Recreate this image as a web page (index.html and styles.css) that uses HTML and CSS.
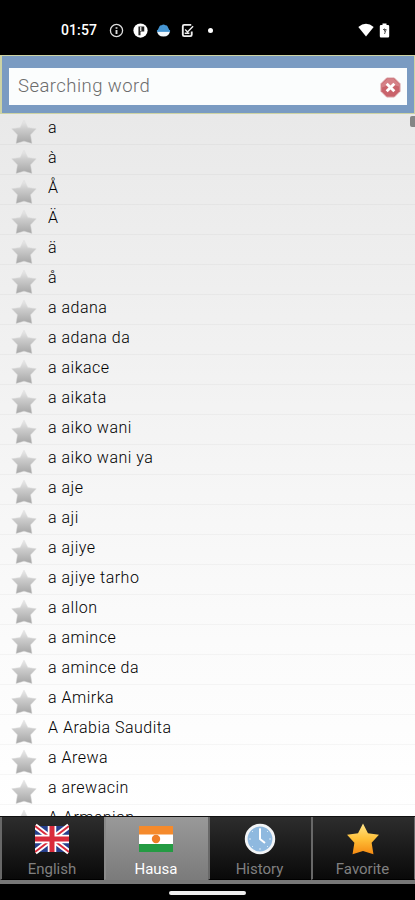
FILE: index.html
```html
<!DOCTYPE html>
<html lang="ha">
<head>
<meta charset="utf-8">
<title>Dictionary</title>
<link rel="stylesheet" href="styles.css">
</head>
<body>
<svg class="defs" width="0" height="0">
  <defs>
    <linearGradient id="silver" x1="0" y1="0" x2="0" y2="1"><stop offset="0" stop-color="#ececec"/><stop offset=".4" stop-color="#cbcbcb"/><stop offset="1" stop-color="#a6a6a6"/></linearGradient>
    <linearGradient id="gold" x1="0" y1="0" x2="0" y2="1"><stop offset="0" stop-color="#ffe58a"/><stop offset=".5" stop-color="#ffc038"/><stop offset="1" stop-color="#f58a12"/></linearGradient>
    <symbol id="star" viewBox="0 0 26 26"><path d="M13 1.200 16.800 8.600 25.200 9.800 19.600 15.800 21 24.600 13 22.200 5 24.600 6.400 15.800.8 9.800 9.200 8.600Z" stroke-linejoin="round"/></symbol>
  </defs>
</svg>
<div class="phone">
  <header class="status">
    <span class="time">01:57</span>
    <svg class="sicon" viewBox="0 0 16 16"><circle cx="8" cy="8" r="6.500" fill="none" stroke="#ddd" stroke-width="1.400"/><path d="M8 4.500v1.700M8 7.400v4.200" stroke="#ddd" stroke-width="2"/></svg>
    <svg class="sicon" viewBox="0 0 16 16"><circle cx="8" cy="8" r="7.600" fill="#fff"/><path d="M5.800 13V3.800H12V9H8v4Z" fill="#222"/><path d="M8.300 4v4.500" stroke="#fff" stroke-width="1.200"/></svg>
    <svg class="sicon" viewBox="0 0 16 16"><path d="M3 5Q4 1.500 6 2.500q2-2 4 0 2-1 3 2.500l2 4H1Z" fill="#4595d2"/><path d="M1 8h14Q14.500 14.500 8 14.500T1 8Z" fill="#f1f7fb"/><path d="M1 8.500h14" stroke="#348bcc" stroke-width="1.800"/></svg>
    <svg class="sicon" viewBox="0 0 16 16"><path d="M12 2H4.500Q3 2 3 3.500V12.500Q3 14 4.500 14H11Q12.500 14 12.500 12.500V9" fill="none" stroke="#eee" stroke-width="2"/><path d="M5.500 7 8 9.500 14 3.500M5 11h5" fill="none" stroke="#eee" stroke-width="1.500"/></svg>
    <i class="dot"></i>
    <svg class="wifi" viewBox="0 0 16 14"><path d="M.3 4Q8-2.500 15.700 4L8 13.500Z" fill="#fff"/></svg>
    <svg class="battery" viewBox="0 0 10 15"><path d="M3 .5h4V2h1.500Q9.700 2 9.700 3.200v10q0 1.300-1.200 1.300h-7Q.3 14.500.3 13.200v-10Q.3 2 1.500 2H3Z" fill="#fff"/><path d="M3.500 6.500h3.200L5 11M5 5.500v3" stroke="#555" fill="none"/></svg>
  </header>
  <div class="search">
    <div class="field"><span>Searching word</span>
      <svg class="clear" viewBox="0 0 22 22"><path d="M7 1h8l6 6v8l-6 6H7l-6-6V7Z" fill="#c9636b" stroke="#d9a0a4"/><path d="M2 9V7.400L7.400 2h7.200L20 7.400V10Q11 7 2 11Z" fill="#dc9297" opacity=".65"/><path d="m7 7 8 8m0-8-8 8" stroke="#fff" stroke-width="3"/></svg>
    </div>
  </div>
  <main class="words">
    <i class="thumb"></i>
    <div class="row"><svg><use href="#star"/></svg><span>a</span></div>
    <div class="row"><svg><use href="#star"/></svg><span>à</span></div>
    <div class="row"><svg><use href="#star"/></svg><span>Å</span></div>
    <div class="row"><svg><use href="#star"/></svg><span>Ä</span></div>
    <div class="row"><svg><use href="#star"/></svg><span>ä</span></div>
    <div class="row"><svg><use href="#star"/></svg><span>å</span></div>
    <div class="row"><svg><use href="#star"/></svg><span>a adana</span></div>
    <div class="row"><svg><use href="#star"/></svg><span>a adana da</span></div>
    <div class="row"><svg><use href="#star"/></svg><span>a aikace</span></div>
    <div class="row"><svg><use href="#star"/></svg><span>a aikata</span></div>
    <div class="row"><svg><use href="#star"/></svg><span>a aiko wani</span></div>
    <div class="row"><svg><use href="#star"/></svg><span>a aiko wani ya</span></div>
    <div class="row"><svg><use href="#star"/></svg><span>a aje</span></div>
    <div class="row"><svg><use href="#star"/></svg><span>a aji</span></div>
    <div class="row"><svg><use href="#star"/></svg><span>a ajiye</span></div>
    <div class="row"><svg><use href="#star"/></svg><span>a ajiye tarho</span></div>
    <div class="row"><svg><use href="#star"/></svg><span>a allon</span></div>
    <div class="row"><svg><use href="#star"/></svg><span>a amince</span></div>
    <div class="row"><svg><use href="#star"/></svg><span>a amince da</span></div>
    <div class="row"><svg><use href="#star"/></svg><span>a Amirka</span></div>
    <div class="row"><svg><use href="#star"/></svg><span>A Arabia Saudita</span></div>
    <div class="row"><svg><use href="#star"/></svg><span>a Arewa</span></div>
    <div class="row"><svg><use href="#star"/></svg><span>a arewacin</span></div>
    <div class="row"><svg><use href="#star"/></svg><span>A Armenian</span></div>
  </main>
  <nav class="tabs">
    <div class="tab">
      <svg viewBox="0 0 34 34"><path fill="#263f8c" d="M0 4h34v26H0z"/><path d="m0 4 34 26M34 4 0 30" stroke="#fff" stroke-width="5.500"/><path d="m0 4 34 26M34 4 0 30" stroke="#d92b3c" stroke-width="2"/><path d="M17 4v26M0 17h34" stroke="#fff" stroke-width="8.500"/><path d="M17 4v26M0 17h34" stroke="#d92b3c" stroke-width="5"/></svg>
      <span>English</span>
    </div>
    <div class="tab active">
      <svg viewBox="0 0 34 34"><path fill="#fff" d="M0 4h34v26H0z"/><path fill="#f58a2c" d="M0 4h34v8.500H0z"/><path fill="#249b43" d="M0 22h34v8H0z"/><circle cx="17" cy="17" r="4.200" fill="#ef7e27"/></svg>
      <span>Hausa</span>
    </div>
    <div class="tab">
      <svg viewBox="0 0 34 34"><circle cx="17" cy="17" r="13.800" fill="#8fb9df" stroke="#f2f4f6" stroke-width="2.800"/><path d="M17 6v2m0 18v2M6 17h2m18 0h2M9 9l1 1m14 14 1 1M25 9l-1 1M10 24l-1 1" stroke="#d9e9f6"/><path d="M17 6.500V17l5 4" fill="none" stroke="#fff" stroke-width="2"/></svg>
      <span>History</span>
    </div>
    <div class="tab last">
      <svg class="gold" viewBox="0 0 34 34"><use href="#star"/></svg>
      <span>Favorite</span>
    </div>
  </nav>
  <footer class="home"><i></i></footer>
</div>
</body>
</html>
```
FILE: styles.css
```css
* { box-sizing: border-box; }
body { margin: 0; background: #000; font-family: Roboto, "Liberation Sans", sans-serif; }
.defs { position: absolute; }
.phone { width: 415px; height: 900px; display: flex; flex-direction: column; overflow: hidden; }
.status { height: 55px; flex: none; display: flex; align-items: center; padding: 5px 25px 0 61px; color: #fff; }
.time { width: 48px; font-size: 14px; font-weight: 500; letter-spacing: .1px; }
.sicon { width: 15px; height: 15px; margin-right: 8.500px; }
.dot { width: 5px; height: 5px; margin-left: 5px; border-radius: 50%; background: #fff; }
.wifi { width: 16px; height: 14px; margin-left: auto; }
.battery { width: 11px; height: 15px; margin-left: 5px; }
.search { height: 59px; flex: none; padding: 12px 7px 8px 7px; background: #7a9bc2; border: 1px solid #cdd3a4; border-left-width: 2px; }
.field { height: 37px; display: flex; align-items: center; justify-content: space-between; padding: 0 6px 1px 9px; background: #fbfdfd; color: #6c6c6c; font-size: 18.500px; font-weight: 300; letter-spacing: .45px; }
.clear { width: 21px; height: 21px; margin-top: 3px; }
.words { flex: 1; min-height: 0; position: relative; overflow: hidden; padding-top: 1px; background: linear-gradient(#e9e9e9, #fbfbfb 75%, #fff); }
.thumb { position: absolute; right: 0; top: 2px; width: 5px; height: 11px; border-radius: 2px 0 0 2px; background: #858585; }
.row { height: 30px; display: flex; padding-left: 11px; border-bottom: 1px solid rgba(0, 0, 0, .03); color: #000; font-size: 16px; font-weight: 300; letter-spacing: .5px; line-height: 25px; }
.row svg { width: 26px; height: 26px; margin: 4px 11px 0 0; fill: url(#silver); stroke: #d8d8d8; stroke-width: .5; flex: none; }
.tabs { height: 68px; flex: none; display: grid; grid-template-columns: 104px 104px 103px 104px; background: #777; border-top: 1px solid #111; padding-bottom: 4px; }
.tab { display: flex; flex-direction: column; align-items: center; padding: 5px 2px 0 0; background: linear-gradient(#2d2d2d, #090909); border-left: 2px solid #686868; border-bottom: 1px solid #000; color: #808080; font-size: 15px; line-height: 18px; }
.tab svg { width: 34px; height: 34px; margin-bottom: 4px; }
.tab.active { background: linear-gradient(#999, #7b7b7b); border-bottom-color: #7b7b7b; border-left-color: #8a8a8a; color: #fff; }
.tab.last { border-right: 1px solid #686868; }
.gold { fill: url(#gold); }
.home { height: 16px; flex: none; display: flex; justify-content: center; padding-top: 7px; }
.home i { width: 77px; height: 4px; border-radius: 2px; background: #eee; }
```
